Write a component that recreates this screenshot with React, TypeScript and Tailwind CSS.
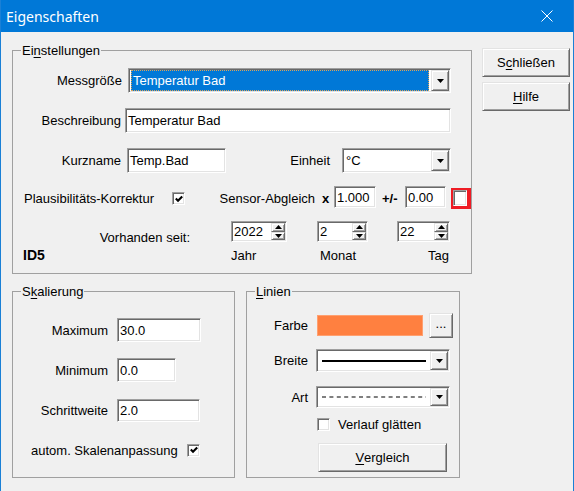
import React from 'react';

// classic win32 3d edges
const SUNKEN =
  'bg-white border border-t-[#a0a0a0] border-l-[#a0a0a0] border-r-white border-b-white shadow-[inset_1px_1px_0_#696969,inset_-1px_-1px_0_#e3e3e3]';
const RAISED =
  'bg-[#f0f0f0] border border-t-[#e3e3e3] border-l-[#e3e3e3] border-r-[#696969] border-b-[#696969] shadow-[inset_1px_1px_0_#fff,inset_-1px_-1px_0_#a0a0a0]';

type Box = { className?: string; children?: React.ReactNode };

function Mn({ children }: { children: React.ReactNode }) {
  return <span className="underline underline-offset-2">{children}</span>;
}

function Group({ legend, className = '', children }: Box & { legend: React.ReactNode }) {
  return (
    <fieldset className={`border border-[#a0a0a0] ${className}`}>
      <legend className="ml-[8px] px-[1px] leading-[15px]">{legend}</legend>
      {children}
    </fieldset>
  );
}

function TextBox({ className = '', children }: Box) {
  return <div className={`${SUNKEN} flex items-center pl-[2px] ${className}`}>{children}</div>;
}

function Arrow({ up = false }: { up?: boolean }) {
  return (
    <svg width="7" height="4" viewBox="0 0 7 4">
      <path d={up ? 'M0 4L3.5 0L7 4Z' : 'M0 0H7L3.5 4Z'} fill="#000" />
    </svg>
  );
}

function Combo({ className = '', children }: Box) {
  return (
    <div className={`${SUNKEN} flex items-stretch p-[1px] ${className}`}>
      <div className="flex-1 min-w-0 flex items-center">{children}</div>
      <div className={`${RAISED} w-[18px] flex items-center justify-center`}>
        <Arrow />
      </div>
    </div>
  );
}

function Spin({ className = '', children }: Box) {
  return (
    <div className={`${SUNKEN} flex items-stretch p-[1px] ${className}`}>
      <div className="flex-1 flex items-center pl-[1px]">{children}</div>
      <div className="w-[14px] flex flex-col">
        <div className={`${RAISED} flex-1 flex items-center justify-center`}>
          <Arrow up />
        </div>
        <div className={`${RAISED} flex-1 flex items-center justify-center`}>
          <Arrow />
        </div>
      </div>
    </div>
  );
}

function Check({ checked = false, className = '' }: { checked?: boolean; className?: string }) {
  return (
    <div className={`${SUNKEN} w-[13px] h-[13px] shrink-0 flex items-center justify-center ${className}`}>
      {checked && (
        <svg width="8" height="8" viewBox="0 0 8 8">
          <path d="M0.8 3.6L3 5.8L7.2 1.4" stroke="#000" strokeWidth="2.1" fill="none" />
        </svg>
      )}
    </div>
  );
}

function Btn({ className = '', children }: Box) {
  return (
    <button type="button" className={`${RAISED} flex items-center justify-center ${className}`}>
      {children}
    </button>
  );
}

function TitleBar() {
  return (
    <div className="h-[32px] bg-[#0078d7] flex items-center justify-between pl-[5px] pr-[20px] text-white font-['Noto_Sans',sans-serif] text-[14px]">
      <span>Eigenschaften</span>
      <svg width="12" height="12" viewBox="0 0 12 12">
        <path d="M0.5 0.5L11.5 11.5M11.5 0.5L0.5 11.5" stroke="#fff" strokeWidth="1" />
      </svg>
    </div>
  );
}

export default function App() {
  return (
    <div className="w-[574px] h-[491px] overflow-hidden bg-[#f0f0f0] border-x border-[#1a80d6] font-['Liberation_Sans',Arial,sans-serif] text-[13px] leading-[15px] text-black">
      <TitleBar />
      <div className="flex pl-[11px]">
        <div>
          {/* Einstellungen */}
          <Group
            className="mt-[11px] w-[459px] h-[231px]"
            legend={
              <>
                Ei<Mn>n</Mn>stellungen
              </>
            }
          >
            <div className="flex items-center h-[25px] mt-[10px]">
              <div className="w-[109px] text-right">Messgröße</div>
              <Combo className="ml-[6px] w-[323px] h-[25px]">
                <div className="h-full flex-1 m-[1px] mr-[2px] bg-[#0078d7] text-white border border-dotted border-[#d9a35a] flex items-center pl-[1px]">
                  Temperatur Bad
                </div>
              </Combo>
            </div>

            <div className="flex items-center h-[25px] mt-[15px]">
              <div className="w-[108px] text-right">Beschreibung</div>
              <TextBox className="ml-[4px] w-[326px] h-[25px]">Temperatur Bad</TextBox>
            </div>

            <div className="flex items-center h-[25px] mt-[15px]">
              <div className="w-[108px] text-right">Kurzname</div>
              <TextBox className="ml-[6px] w-[99px] h-[25px]">Temp.Bad</TextBox>
              <div className="w-[104px] text-right">Einheit</div>
              <Combo className="ml-[12px] w-[109px] h-[25px]">
                <span className="pl-[2px]">°C</span>
              </Combo>
            </div>

            <div className="flex items-center h-[22px] mt-[13px]">
              <div className="w-[159px] pl-[11px] mt-[3px]">Plausibilitäts-Korrektur</div>
              <Check checked className="mt-[3px]" />
              <div className="w-[130px] text-right mt-[3px]">Sensor-Abgleich</div>
              <div className="w-[19px] pl-[7px] font-bold mt-[3px]">x</div>
              <TextBox className="w-[42px] h-[22px]">1.000</TextBox>
              <div className="w-[29px] pl-[6px] font-bold mt-[3px]">+/-</div>
              <TextBox className="w-[41px] h-[22px]">0.00</TextBox>
              <div className="ml-[5px] w-[20px] h-[21px] mt-[3px] border-[#ee1c25] border-l-2 border-t-2 border-r-4 border-b-[3px]">
                <div className={`${SUNKEN} w-full h-full`} />
              </div>
            </div>

            <div className="flex items-start h-[21px] mt-[13px]">
              <div className="w-[177px] text-right mt-[9px]">Vorhanden seit:</div>
              <Spin className="ml-[41px] w-[56px] h-[21px]">2022</Spin>
              <Spin className="ml-[30px] w-[51px] h-[21px]">2</Spin>
              <Spin className="ml-[29px] w-[53px] h-[21px]">22</Spin>
            </div>

            <div className="flex h-[15px] mt-[6px]">
              <div className="w-[218px] pl-[10px] font-bold text-[14px]">ID5</div>
              <div className="w-[89px]">Jahr</div>
              <div className="w-[80px]">Monat</div>
              <div className="w-[49px] text-right">Tag</div>
            </div>
          </Group>

          <div className="flex gap-[11px] mt-[10px]">
            {/* Skalierung */}
            <Group
              className="w-[223px] h-[194px]"
              legend={
                <>
                  S<Mn>k</Mn>alierung
                </>
              }
            >
              <div className="flex items-center h-[24px] mt-[19px]">
                <div className="w-[95px] text-right">Maximum</div>
                <TextBox className="ml-[9px] w-[84px] h-[24px]">30.0</TextBox>
              </div>
              <div className="flex items-center h-[24px] mt-[16px]">
                <div className="w-[95px] text-right">Minimum</div>
                <TextBox className="ml-[9px] w-[59px] h-[24px]">0.0</TextBox>
              </div>
              <div className="flex items-center h-[23px] mt-[17px]">
                <div className="w-[95px] text-right">Schrittweite</div>
                <TextBox className="ml-[9px] w-[83px] h-[23px]">2.0</TextBox>
              </div>
              <div className="flex items-center h-[14px] mt-[21px]">
                <div className="w-[174px] pl-[18px] whitespace-nowrap">autom. Skalenanpassung</div>
                <Check checked />
              </div>
            </Group>

            {/* Linien */}
            <Group
              className="w-[214px] h-[194px]"
              legend={
                <>
                  <Mn>L</Mn>inien
                </>
              }
            >
              <div className="flex items-center h-[25px] mt-[14px]">
                <div className="w-[61px] text-right">Farbe</div>
                <div className="ml-[9px] w-[106px] h-[21px] bg-[#ff8040] border border-[#ffa070]" />
                <Btn className="ml-[6px] w-[24px] h-[25px] pb-[4px]">...</Btn>
              </div>
              <div className="flex items-center h-[23px] mt-[11px]">
                <div className="w-[61px] text-right">Breite</div>
                <Combo className="ml-[8px] w-[134px] h-[23px]">
                  <div className="ml-[4px] mr-[4px] flex-1 h-[2px] bg-black" />
                </Combo>
              </div>
              <div className="flex items-center h-[22px] mt-[14px]">
                <div className="w-[61px] text-right">Art</div>
                <Combo className="ml-[8px] w-[134px] h-[22px]">
                  <svg className="ml-[4px]" width="104" height="2" viewBox="0 0 104 2">
                    <line x1="0" y1="1" x2="104" y2="1" stroke="#000" strokeWidth="1.2" strokeDasharray="4 3.4" />
                  </svg>
                </Combo>
              </div>
              <div className="flex items-center h-[14px] mt-[9px]">
                <Check className="ml-[70px]" />
                <div className="ml-[8px]">Verlauf glätten</div>
              </div>
              <Btn className="mt-[12px] ml-[71px] w-[129px] h-[29px]">
                <Mn>V</Mn>ergleich
              </Btn>
            </Group>
          </div>
        </div>

        {/* Buttons */}
        <div className="ml-[10px] mt-[16px] flex flex-col gap-[5px]">
          <Btn className="w-[88px] h-[29px]">
            S<Mn>c</Mn>hließen
          </Btn>
          <Btn className="w-[88px] h-[29px]">
            <Mn>H</Mn>ilfe
          </Btn>
        </div>
      </div>
    </div>
  );
}
